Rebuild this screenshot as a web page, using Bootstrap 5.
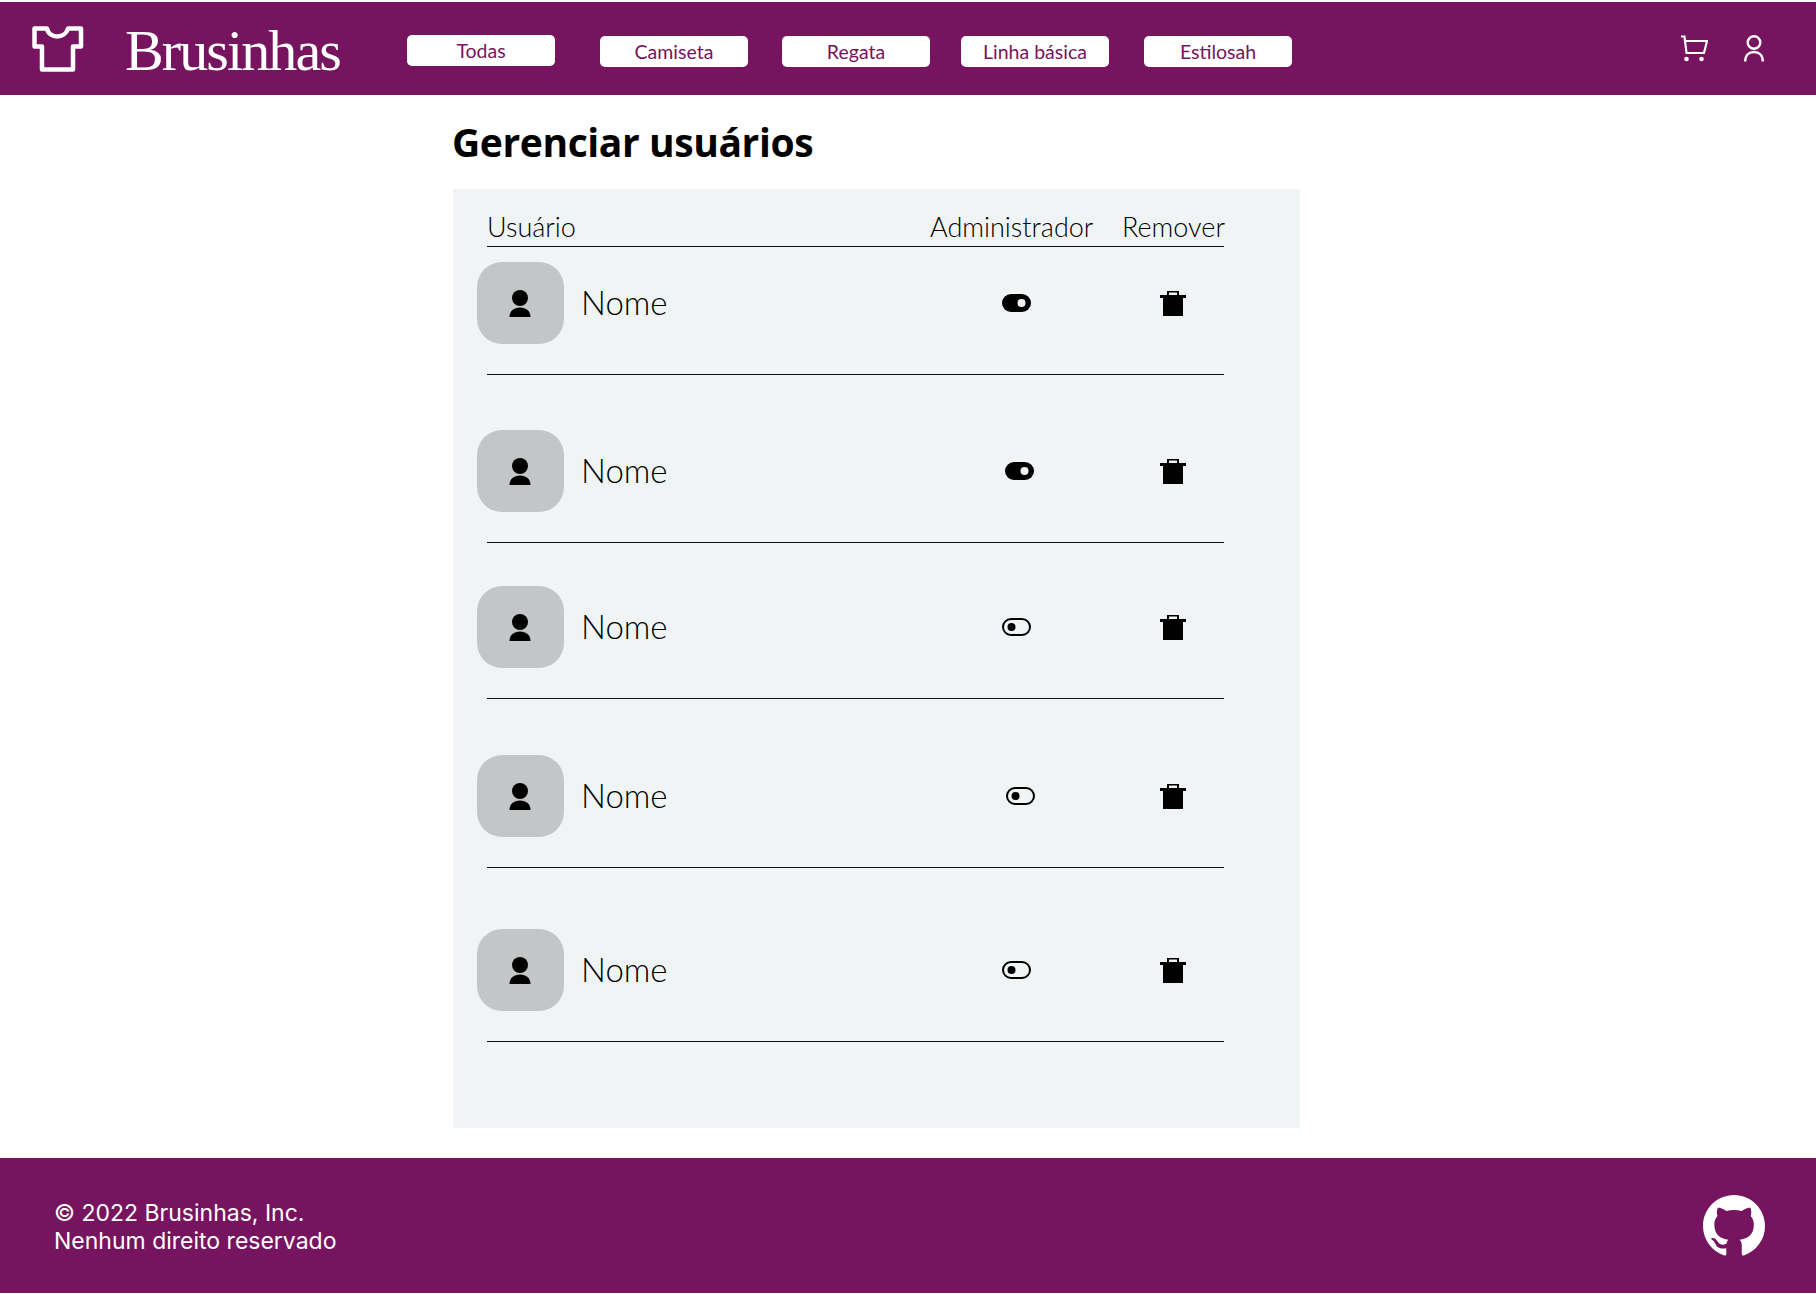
<!DOCTYPE html>
<html lang="pt-BR">

<head>
  <meta charset="UTF-8">
  <meta name="viewport" content="width=device-width, initial-scale=1.0">
  <title>Brusinhas - Gerenciar usuários</title>
  <link href="https://cdn.jsdelivr.net/npm/bootstrap@5.3.0/dist/css/bootstrap.min.css" rel="stylesheet">
  <style>
    body { background: #fff; color: #000; font-family: "Lato", "Liberation Sans", sans-serif; }

    /* header */
    .top-bar { background: #771460; height: 93px; margin-top: 2px; padding: 0 52px 0 32px; }
    .brand-name { color: #fff; font-family: "Liberation Serif", serif; font-size: 58px; line-height: 1; width: 213px; margin-left: 41px; margin-top: 5px; letter-spacing: -1.900px; text-decoration: none; white-space: nowrap; }
    .brand-name:hover { color: #fff; }
    .cat-btn { width: 148px; height: 31px; padding: 0; background: #fff; color: #771460; border: 0; border-radius: 5px; font-family: "Lato", sans-serif; font-size: 19.500px; line-height: 29px; }
    .cat-btn:hover { background: #fff; color: #771460; }
    .cat-first { margin-left: 69px; margin-right: 45px; margin-top: 3px; }
    .cat-list { gap: 33px; margin-top: 5px; }
    .cat-shift-a { margin-left: 1px; }
    .cat-shift-b { margin-left: -2px; }
    .cat-shift-c { margin-left: 2px; }
    .top-icons { gap: 36px; }

    /* main */
    .page-title { font-family: "Open Sans", sans-serif; font-weight: 700; font-size: 39px; line-height: 48px; margin: 0 0 23px -1px; padding-top: 23px; letter-spacing: -.400px; }
    .page-main { margin-left: 453px; width: 847px; height: 1063px; }
    .users-panel { background: #f1f4f5; height: 939px; padding: 27px 76px 0 34px; }
    .users-head { border-bottom: 1.500px solid #111; font-weight: 300; font-size: 27px; line-height: 22px; height: 30px; box-sizing: content-box; }
    .user-line { border-bottom: 1.500px solid #111; padding-bottom: 30px; }
    .line-a { margin-top: 15px; }
    .line-b { margin-top: 55px; }
    .line-c { margin-top: 43px; }
    .line-d { margin-top: 56px; }
    .line-e { margin-top: 61px; }
    .avatar-box { width: 87px; height: 82px; margin-left: -10px; margin-right: 17px; padding-right: 2px; background: #c2c6c6; border-radius: 25px; }
    .user-name { font-weight: 300; font-size: 33px; }
    .col-admin { width: 161px; }
    .col-remove { width: 102px; margin-left: 31px; }
    .toggle-cell { padding-left: 12px; }
    .nudge-a { padding-left: 17px; }
    .nudge-b { padding-left: 19px; }

    /* footer */
    .bottom-bar { background: #771460; color: #fff; height: 135px; padding: 3px 51px 0 54px; font-family: "Inter", sans-serif; font-size: 23px; line-height: 28px; }
    .bottom-bar svg { margin-top: -3px; }
  </style>
</head>

<body>
  <!-- Header -->
  <nav class="top-bar d-flex align-items-center">
    <svg width="52" height="46" viewBox="0 0 52 46" fill="none" stroke="#fff" stroke-width="4.500" stroke-linejoin="round">
      <path d="M2.500 2.500H15C17 13 33 13 36 2.500H49V20.500H41V43.500H10V20.500H2.500Z" />
    </svg>
    <a class="brand-name" href="#">Brusinhas</a>
    <button class="btn cat-btn cat-first">Todas</button>
    <div class="d-flex cat-list">
      <button class="btn cat-btn">Camiseta</button>
      <button class="btn cat-btn cat-shift-a">Regata</button>
      <button class="btn cat-btn cat-shift-b">Linha básica</button>
      <button class="btn cat-btn cat-shift-c">Estilosah</button>
    </div>
    <div class="d-flex align-items-center top-icons ms-auto">
      <svg width="27" height="27" viewBox="0 0 27 27" fill="none" stroke="#fff" stroke-width="2.200">
        <path d="M0 1.500H3.500L5.500 18H23L26 6H4.500" />
        <circle cx="5.500" cy="24" r="2.300" fill="#fff" stroke="none" />
        <circle cx="20.500" cy="24" r="2.300" fill="#fff" stroke="none" />
      </svg>
      <svg width="20" height="27" viewBox="0 0 20 27" fill="none" stroke="#fff" stroke-width="2.400">
        <circle cx="10" cy="7.500" r="6.300" />
        <path d="M1.200 26.500C1.200 20 5 17 10 17S18.800 20 18.800 26.500" />
      </svg>
    </div>
  </nav>

  <!-- Users -->
  <main class="page-main">
    <h1 class="page-title">Gerenciar usuários</h1>
    <div class="users-panel">
      <div class="users-head d-flex">
        <div class="flex-grow-1">Usuário</div>
        <div class="col-admin text-center text-nowrap">Administrador</div>
        <div class="col-remove text-center">Remover</div>
      </div>
      <div id="userRows"></div>
    </div>
  </main>

  <!-- Footer -->
  <footer class="bottom-bar d-flex align-items-center justify-content-between">
    <div>© 2022 Brusinhas, Inc.<br>Nenhum direito reservado</div>
    <svg width="62" height="62" viewBox="0 0 16 16" fill="#fff">
      <path d="M8 0C3.58 0 0 3.58 0 8c0 3.54 2.29 6.53 5.47 7.59.4.07.55-.17.55-.38 0-.19-.01-.82-.01-1.49-2.01.37-2.53-.49-2.69-.94-.09-.23-.48-.94-.82-1.13-.28-.15-.68-.52-.01-.53.63-.01 1.08.58 1.23.82.72 1.21 1.87.87 2.33.66.07-.52.28-.87.51-1.07-1.78-.2-3.64-.89-3.64-3.95 0-.87.31-1.59.82-2.15-.08-.2-.36-1.02.08-2.12 0 0 .67-.21 2.2.82.64-.18 1.32-.27 2-.27.68 0 1.36.09 2 .27 1.53-1.04 2.2-.82 2.2-.82.44 1.1.16 1.92.08 2.12.51.56.82 1.27.82 2.15 0 3.07-1.87 3.75-3.65 3.95.29.25.54.73.54 1.48 0 1.07-.01 1.93-.01 2.2 0 .21.15.46.55.38A8.013 8.013 0 0016 8c0-4.42-3.58-8-8-8z" />
    </svg>
  </footer>

  <script>
    const users = [
      { line: "line-a", admin: true, nudge: "" },
      { line: "line-b", admin: true, nudge: "nudge-a" },
      { line: "line-c", admin: false, nudge: "" },
      { line: "line-d", admin: false, nudge: "nudge-b" },
      { line: "line-e", admin: false, nudge: "" },
    ];

    const toggleOn = `<svg width="29" height="18" viewBox="0 0 29 18"><rect width="29" height="18" rx="9" /><circle cx="19.500" cy="9" r="4" fill="#f1f4f5" /></svg>`;
    const toggleOff = `<svg width="29" height="18" viewBox="0 0 29 18"><rect x="1" y="1" width="27" height="16" rx="8" fill="none" stroke="#000" stroke-width="2" /><circle cx="9.500" cy="9" r="4" /></svg>`;

    // Fill the user rows
    document.getElementById("userRows").innerHTML = users.map(user => `
      <div class="user-line ${user.line} d-flex align-items-center">
        <div class="avatar-box d-flex align-items-center justify-content-center">
          <svg width="22" height="27" viewBox="0 0 22 27"><circle cx="11" cy="8" r="8" /><path d="M0.500 27C0.500 21 5 17.500 11 17.500S21.500 21 21.500 27Z" /></svg>
        </div>
        <div class="user-name flex-grow-1">Nome</div>
        <div class="col-admin d-flex justify-content-center toggle-cell ${user.nudge}">${user.admin ? toggleOn : toggleOff}</div>
        <div class="col-remove d-flex justify-content-center">
          <svg width="26" height="26" viewBox="0 0 26 26"><path d="M7 5V1H19V5H17V2.500H9V5Z" /><rect y="5" width="26" height="3" /><rect x="3" y="8" width="20" height="18" /></svg>
        </div>
      </div>`).join("");
  </script>
  <script src="https://cdn.jsdelivr.net/npm/bootstrap@5.3.0/dist/js/bootstrap.bundle.min.js"></script>
</body>

</html>
